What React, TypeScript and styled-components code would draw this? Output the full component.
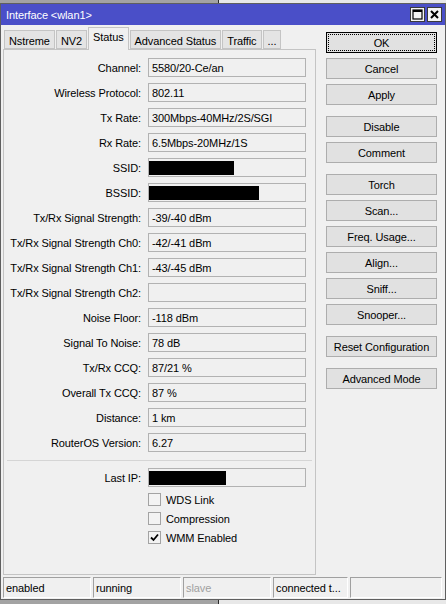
import React from 'react'
import styled, { createGlobalStyle } from 'styled-components'

const GlobalStyle = createGlobalStyle`
  html, body {
    margin: 0;
    padding: 0;
  }
  body {
    width: 446px;
    height: 604px;
    overflow: hidden;
    font-family: 'Liberation Sans', Arial, sans-serif;
    font-size: 11px;
    letter-spacing: -0.1px;
    color: #000;
    background:
      linear-gradient(to right, #a3a3a3 0, #a3a3a3 218px, #2a2a2a 218px, #2a2a2a 219px, #e8e8e8 219px);
  }
`

const Window = styled.div`
  margin-top: 3px;
  height: 597px;
  box-sizing: border-box;
  background: #f0f0f0;
  border: 1px solid #5f5f5f;
  display: flex;
  flex-direction: column;
`

const TitleBar = styled.div`
  height: 21px;
  flex-shrink: 0;
  background: #4a4fc8;
  color: #fff;
  display: flex;
  align-items: center;
  padding: 0 3px 0 5px;
`

const TitleText = styled.span`
  flex: 1;
`

const TitleButtons = styled.div`
  display: flex;
  gap: 2px;
`

const TitleButton = styled.div`
  width: 15px;
  height: 15px;
  box-sizing: border-box;
  background: #f4f4f4;
  border: 1px solid #3a3a3a;
  display: flex;
  align-items: center;
  justify-content: center;
`

const Main = styled.div`
  flex: 1;
  display: flex;
  padding-left: 2px;
`

const LeftColumn = styled.div`
  width: 313px;
  display: flex;
  flex-direction: column;
`

const TabBar = styled.div`
  height: 24px;
  display: flex;
  align-items: flex-end;
  gap: 1px;
  padding-left: 1px;
`

const Tab = styled.div<{ active?: boolean }>`
  box-sizing: border-box;
  height: ${({ active }) => (active ? '23px' : '19px')};
  padding: ${({ active }) => (active ? '3px 4px 0' : '4px 4px 0')};
  margin-bottom: ${({ active }) => (active ? '-1px' : '0')};
  background: ${({ active }) => (active ? '#f0f0f0' : '#e4e4e4')};
  border: 1px solid #c4c4c4;
  border-bottom: ${({ active }) => (active ? 'none' : '1px solid #c4c4c4')};
  position: relative;
  z-index: ${({ active }) => (active ? 1 : 0)};
  white-space: nowrap;
`

const Panel = styled.div`
  height: 526px;
  box-sizing: border-box;
  border: 1px solid #c4c4c4;
  background: #f0f0f0;
  padding-top: 8px;
`

const FieldGrid = styled.div`
  display: grid;
  grid-template-columns: 137px 158px;
  column-gap: 7px;
  row-gap: 6px;
  align-items: center;
`

const Label = styled.div`
  text-align: right;
  white-space: nowrap;
`

const Field = styled.div`
  height: 19px;
  box-sizing: border-box;
  border: 1px solid #b2b2b2;
  background: #f0f0f0;
  padding: 0 3px;
  display: flex;
  align-items: center;
  white-space: nowrap;
`

const Redacted = styled.div<{ w: number }>`
  width: ${({ w }) => w}px;
  height: 14px;
  background: #000;
  margin-left: -3px;
`

const Separator = styled.div`
  height: 1px;
  margin: 8px 3px 7px 3px;
  background: #d5d5d5;
`

const CheckList = styled.div`
  display: flex;
  flex-direction: column;
  gap: 6px;
  padding-left: 144px;
  margin-top: 6px;
`

const CheckRow = styled.div`
  display: flex;
  align-items: center;
  gap: 5px;
  height: 13px;
`

const CheckBox = styled.div`
  width: 13px;
  height: 13px;
  box-sizing: border-box;
  border: 1px solid #a3a3a3;
  background: #f3f3f3;
  display: flex;
  align-items: center;
  justify-content: center;
`

const RightColumn = styled.div`
  margin-left: 10px;
  padding-top: 7px;
  display: flex;
  flex-direction: column;
  width: 111px;
`

const ButtonGroup = styled.div`
  display: flex;
  flex-direction: column;
  gap: 5px;
  margin-bottom: 11px;
`

const Button = styled.div<{ focused?: boolean }>`
  height: 21px;
  box-sizing: border-box;
  background: #e1e1e1;
  border: 1px solid ${({ focused }) => (focused ? '#000' : '#adadad')};
  display: flex;
  align-items: center;
  justify-content: center;
  position: relative;
  white-space: nowrap;
  ${({ focused }) =>
    focused
      ? `&::after {
    content: '';
    position: absolute;
    inset: 1px;
    border: 1px dotted #000;
  }`
      : ''}
`

const StatusBar = styled.div`
  height: 21px;
  flex-shrink: 0;
  display: flex;
  gap: 2px;
  padding-left: 2px;
  margin-bottom: 1px;
`

const StatusCell = styled.div<{ w: number; muted?: boolean }>`
  width: ${({ w }) => w}px;
  box-sizing: border-box;
  border-top: 1px solid #a0a0a0;
  border-left: 1px solid #a0a0a0;
  border-bottom: 1px solid #fff;
  border-right: 1px solid #fff;
  padding-left: 2px;
  display: flex;
  align-items: center;
  color: ${({ muted }) => (muted ? '#a0a0a0' : '#000')};
  white-space: nowrap;
`

const rows: { label: string; value?: string; redact?: number }[] = [
  { label: 'Channel:', value: '5580/20-Ce/an' },
  { label: 'Wireless Protocol:', value: '802.11' },
  { label: 'Tx Rate:', value: '300Mbps-40MHz/2S/SGI' },
  { label: 'Rx Rate:', value: '6.5Mbps-20MHz/1S' },
  { label: 'SSID:', redact: 85 },
  { label: 'BSSID:', redact: 110 },
  { label: 'Tx/Rx Signal Strength:', value: '-39/-40 dBm' },
  { label: 'Tx/Rx Signal Strength Ch0:', value: '-42/-41 dBm' },
  { label: 'Tx/Rx Signal Strength Ch1:', value: '-43/-45 dBm' },
  { label: 'Tx/Rx Signal Strength Ch2:', value: '' },
  { label: 'Noise Floor:', value: '-118 dBm' },
  { label: 'Signal To Noise:', value: '78 dB' },
  { label: 'Tx/Rx CCQ:', value: '87/21 %' },
  { label: 'Overall Tx CCQ:', value: '87 %' },
  { label: 'Distance:', value: '1 km' },
  { label: 'RouterOS Version:', value: '6.27' },
]

const buttonGroups = [
  ['OK', 'Cancel', 'Apply'],
  ['Disable', 'Comment'],
  ['Torch', 'Scan...', 'Freq. Usage...', 'Align...', 'Sniff...', 'Snooper...'],
  ['Reset Configuration'],
  ['Advanced Mode'],
]

const tabs = ['Nstreme', 'NV2', 'Status', 'Advanced Status', 'Traffic', '...']

const checks = [
  { label: 'WDS Link', checked: false },
  { label: 'Compression', checked: false },
  { label: 'WMM Enabled', checked: true },
]

const App: React.FC = () => {
  return (
    <>
      <GlobalStyle />
      <Window>
        <TitleBar>
          <TitleText>Interface &lt;wlan1&gt;</TitleText>
          <TitleButtons>
            <TitleButton>
              <svg width="11" height="11" viewBox="0 0 11 11">
                <rect x="1" y="1" width="9" height="9" fill="none" stroke="#000" strokeWidth="1.2" />
                <rect x="1" y="1" width="9" height="2" fill="#000" />
              </svg>
            </TitleButton>
            <TitleButton>
              <svg width="11" height="11" viewBox="0 0 11 11">
                <path d="M2 2 L9 9 M9 2 L2 9" stroke="#000" strokeWidth="2" />
              </svg>
            </TitleButton>
          </TitleButtons>
        </TitleBar>
        <Main>
          <LeftColumn>
            <TabBar>
              {tabs.map((t) => (
                <Tab key={t} active={t === 'Status'}>
                  {t}
                </Tab>
              ))}
            </TabBar>
            <Panel>
              <FieldGrid>
                {rows.map((r) => (
                  <React.Fragment key={r.label}>
                    <Label>{r.label}</Label>
                    <Field>{r.redact ? <Redacted w={r.redact} /> : r.value}</Field>
                  </React.Fragment>
                ))}
              </FieldGrid>
              <Separator />
              <FieldGrid>
                <Label>Last IP:</Label>
                <Field>
                  <Redacted w={77} />
                </Field>
              </FieldGrid>
              <CheckList>
                {checks.map((c) => (
                  <CheckRow key={c.label}>
                    <CheckBox>
                      {c.checked && (
                        <svg width="9" height="9" viewBox="0 0 9 9">
                          <path d="M1 4.5 L3.5 7 L8 1.5" fill="none" stroke="#000" strokeWidth="1.8" />
                        </svg>
                      )}
                    </CheckBox>
                    <span>{c.label}</span>
                  </CheckRow>
                ))}
              </CheckList>
            </Panel>
          </LeftColumn>
          <RightColumn>
            {buttonGroups.map((g, i) => (
              <ButtonGroup key={i}>
                {g.map((b) => (
                  <Button key={b} focused={b === 'OK'}>
                    {b}
                  </Button>
                ))}
              </ButtonGroup>
            ))}
          </RightColumn>
        </Main>
        <StatusBar>
          <StatusCell w={88}>enabled</StatusCell>
          <StatusCell w={88}>running</StatusCell>
          <StatusCell w={88} muted>
            slave
          </StatusCell>
          <StatusCell w={75}>connected t...</StatusCell>
          <StatusCell w={92} />
        </StatusBar>
      </Window>
    </>
  )
}

export default App
